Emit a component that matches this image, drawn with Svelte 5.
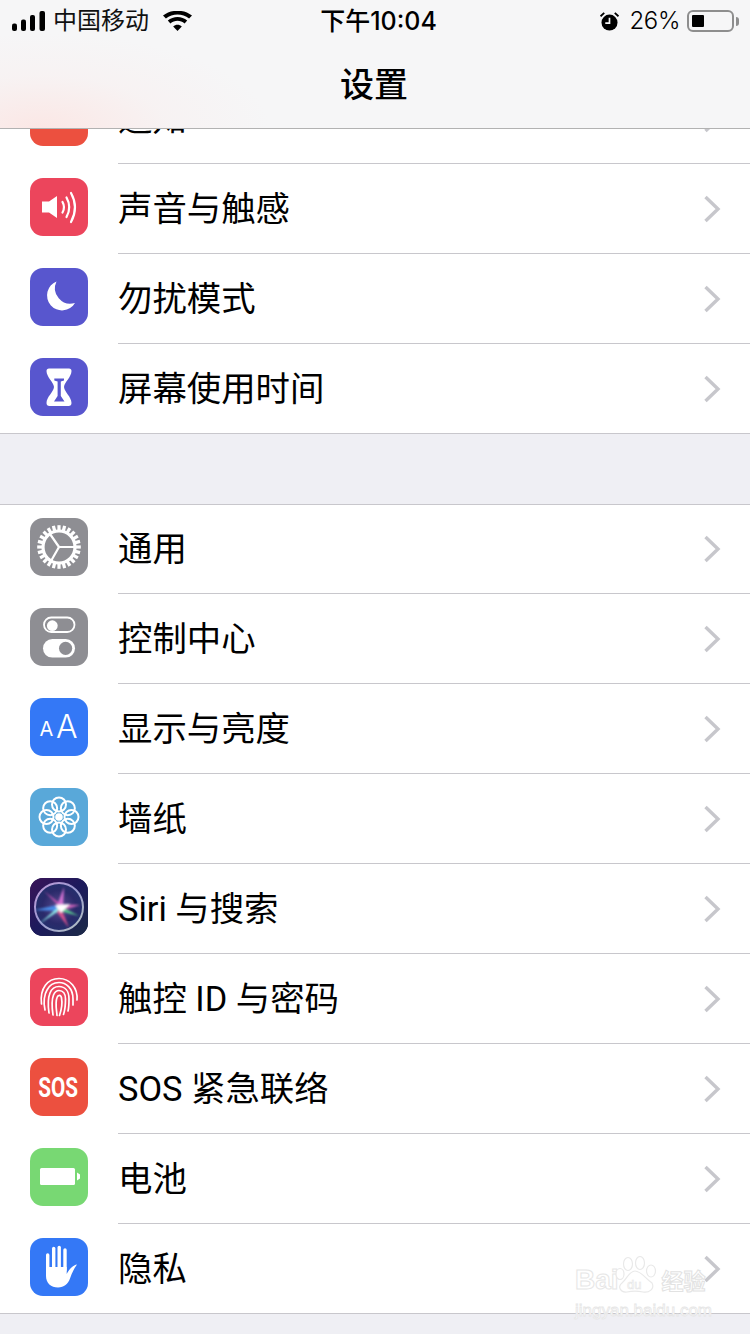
<script>
  const firstGroup = [
    { key: 'notify', label: '通知', bg: '#ec503f' },
    { key: 'sound', label: '声音与触感', bg: '#ec455c' },
    { key: 'moon', label: '勿扰模式', bg: '#5856ce' },
    { key: 'hourglass', label: '屏幕使用时间', bg: '#5856ce' }
  ];

  const secondGroup = [
    { key: 'gear', label: '通用', bg: '#8e8e93' },
    { key: 'toggles', label: '控制中心', bg: '#8e8e93' },
    { key: 'text', label: '显示与亮度', bg: '#3478f6' },
    { key: 'flower', label: '墙纸', bg: '#59a8d9' },
    { key: 'siri', label: 'Siri 与搜索', bg: '#1d1f4d' },
    { key: 'finger', label: '触控 ID 与密码', bg: '#ec455c' },
    { key: 'sos', label: 'SOS 紧急联络', bg: '#ec503f' },
    { key: 'battery', label: '电池', bg: '#78d873' },
    { key: 'hand', label: '隐私', bg: '#3478f6' }
  ];

  const teeth = Array.from({ length: 24 }, (_, i) => i * 15);
  const petals = Array.from({ length: 8 }, (_, i) => i * 45);
</script>

{#snippet glyph(key)}
  <svg class="icon-svg" viewBox="0 0 58 58">
    {#if key === 'notify'}
      <rect x="13" y="-9" width="32" height="24" rx="4" fill="none" stroke="#fff" stroke-width="2" />
    {:else if key === 'sound'}
      <polygon points="12,23.5 19,23.5 27,18 27,40 19,34.5 12,34.5" fill="#fff" />
      <g fill="none" stroke="#fff" stroke-width="2.2" stroke-linecap="round">
        <path d="M32.5 24 Q35.5 29.3 32.5 34.5" />
        <path d="M36.5 19.5 Q42 29.3 36.5 39" />
        <path d="M41 15 Q49 29.3 41 44" />
      </g>
    {:else if key === 'moon'}
      <path d="M26.5 13.5 A15 15 0 1 0 45 35 A15.5 15.5 0 0 1 26.5 13.5Z" fill="#fff" />
    {:else if key === 'hourglass'}
      <path d="M19 10.5 H39 Q41.5 10.5 41.5 13 C41.5 19 34.5 24 34 29 C34.5 34 41.5 39 41.5 45 Q41.5 48 38.5 48 H19.5 Q16.5 48 16.5 45 C16.5 39 23.5 34 24 29 C23.5 24 16.5 19 16.5 13 Q16.5 10.5 19 10.5Z" fill="#fff" />
      <path d="M24.3 20.5 H34 V22.5 L30.8 23.5 V38 L34.5 43.5 H24 L27.6 38 V23.5 L24.3 22.5Z" fill="#5856ce" />
    {:else if key === 'gear'}
      <g fill="#fff">
        {#each teeth as a}
          <rect x="27.4" y="7.2" width="3.2" height="6" transform="rotate({a} 29 29)" />
        {/each}
      </g>
      <circle cx="29" cy="29" r="16" fill="none" stroke="#fff" stroke-width="3.2" />
      <g stroke="#fff" stroke-width="2.2" stroke-linecap="round">
        <line x1="29" y1="29" x2="20" y2="16" />
        <line x1="29" y1="29" x2="44" y2="29" />
        <line x1="29" y1="29" x2="21" y2="43" />
      </g>
    {:else if key === 'toggles'}
      <rect x="14" y="9.5" width="30.5" height="14.5" rx="7.2" fill="none" stroke="#fff" stroke-width="1.8" />
      <circle cx="22.3" cy="17.7" r="5.4" fill="#fff" />
      <rect x="13" y="31" width="32" height="18.6" rx="9.3" fill="#fff" />
      <circle cx="35.6" cy="40.3" r="6.6" fill="#8e8e93" />
    {:else if key === 'text'}
      <text class="aa" x="9.5" y="37.5" font-size="20">A</text>
      <text class="aa big" x="26" y="40" font-size="32">A</text>
    {:else if key === 'flower'}
      <g fill="none" stroke="#fff" stroke-width="2">
        {#each petals as a}
          <circle cx="29" cy="16.5" r="7" transform="rotate({a} 29 29)" />
        {/each}
      </g>
      <circle cx="29" cy="29" r="3.8" fill="#fff" />
    {:else if key === 'siri'}
      <defs>
        <linearGradient id="siri-bg" x1="0" y1="0" x2="1" y2="1">
          <stop offset="0" stop-color="#3a1458" />
          <stop offset="0.5" stop-color="#1c1a5c" />
          <stop offset="1" stop-color="#1c2b46" />
        </linearGradient>
        <linearGradient id="siri-ring" x1="0" y1="0" x2="1" y2="1">
          <stop offset="0" stop-color="#c09ad8" />
          <stop offset="0.5" stop-color="#9a9ad0" />
          <stop offset="1" stop-color="#b4c4c0" />
        </linearGradient>
        <radialGradient id="siri-disc">
          <stop offset="0" stop-color="#5a4a90" />
          <stop offset="0.7" stop-color="#2a2a6a" />
          <stop offset="1" stop-color="#232f6c" />
        </radialGradient>
        <filter id="siri-blur"><feGaussianBlur stdDeviation="1" /></filter>
      </defs>
      <rect width="58" height="58" fill="url(#siri-bg)" />
      <circle cx="29" cy="29" r="24" fill="url(#siri-disc)" stroke="url(#siri-ring)" stroke-width="2" />
      <g filter="url(#siri-blur)">
        <polygon points="29,25 14,13 34,33" fill="#d858b8" />
        <polygon points="28,26 50,27 31,33" fill="#c862b8" />
        <polygon points="26,30 34,9 33,30" fill="#d070d0" />
        <polygon points="28,27 49,38 30,33" fill="#58d090" />
        <polygon points="30,27 39,50 26,33" fill="#d0508c" />
        <polygon points="27,27 5,32 28,33" fill="#4a8ce8" />
        <polygon points="32,26 9,46 27,34" fill="#90f0ec" />
        <polygon points="25,27 40,26 31,35" fill="#fff" />
      </g>
    {:else if key === 'finger'}
      <g fill="none" stroke="#fff" stroke-width="1.7" stroke-linecap="round">
        <path d="M11.5 36 C9.5 20 18 10.5 29 10.5 C40 10.5 48 20 47 32" />
        <path d="M15 42 C13 34 14.5 26 17 22 C20 16 25 14.5 29 14.5 C36 14.5 43 20 43 31 V37" />
        <path d="M19 45 C18 38 17.5 31 20 25 C22 20 26 18.5 29 18.5 C35 18.5 39 23 39 31 C39 35 39 39 38 43" />
        <path d="M23 47 C22 40 21 33 23.5 27 C25 23.5 27 22.5 29 22.5 C33 22.5 35.5 26 35.5 31 C35.5 37 35 42 33.5 46.5" />
        <path d="M27 47.5 C26.5 41 25 35 27 29.5 C28 26.5 31 26.5 31.5 30 C32.5 35 31 43 29.5 47.5" />
      </g>
    {:else if key === 'sos'}
      <text class="sos" transform="translate(8.3 38.8) scale(0.74 1)">SOS</text>
    {:else if key === 'battery'}
      <rect x="10" y="20" width="35" height="17" rx="1.5" fill="#fff" />
      <path d="M47 24.5 L50 26.5 V30.5 L47 32.5Z" fill="#fff" />
    {:else if key === 'hand'}
      <g stroke="#fff" stroke-width="3.4" stroke-linecap="round">
        <line x1="17.7" y1="17" x2="17.7" y2="34" />
        <line x1="23.7" y1="10.5" x2="23.7" y2="32" />
        <line x1="29.2" y1="9.5" x2="29.2" y2="32" />
        <line x1="35" y1="12" x2="35" y2="32" />
      </g>
      <path d="M16 29 H36.7 V36 C38.5 32.5 42.5 27 47 26.5 C44 30.5 41.5 36 40 40.5 C38 46 34 49.5 28 49.5 C21 49.5 16 45 16 38Z" fill="#fff" />
    {/if}
  </svg>
{/snippet}

{#snippet row(item)}
  <div class="row">
    <div class="icon" style="background:{item.bg}">
      {@render glyph(item.key)}
    </div>
    <div class="row-body">
      <span class="label">{item.label}</span>
      <svg class="chevron" viewBox="0 0 18 28">
        <path d="M2.5 2 L15 14 L2.5 26" />
      </svg>
    </div>
  </div>
{/snippet}

<div class="page">
  <header class="nav">
    <div class="status">
      <div class="status-left">
        <svg class="signal" viewBox="0 0 33 20">
          <rect x="0" y="12.5" width="5" height="7.5" rx="2" />
          <rect x="9" y="8.5" width="5" height="11.5" rx="2" />
          <rect x="18" y="4" width="5" height="16" rx="2" />
          <rect x="27.5" y="0" width="5.5" height="20" rx="2" />
        </svg>
        <span class="carrier">中国移动</span>
        <svg class="wifi" viewBox="0 0 29 20">
          <path d="M14.5 20 L10.2 15.4 C12.6 13.2 16.4 13.2 18.8 15.4Z" />
          <path d="M7.4 12.4 L4.8 9.6 C10.2 4.7 18.8 4.7 24.2 9.6 L21.6 12.4 C17.6 8.8 11.4 8.8 7.4 12.4Z" />
          <path d="M2.9 7.6 L0 4.6 C8 -1.9 21 -1.9 29 4.6 L26.1 7.6 C19.4 2.2 9.6 2.2 2.9 7.6Z" />
        </svg>
      </div>
      <div class="time">下午10:04</div>
      <div class="status-right">
        <svg class="alarm" viewBox="0 0 18 18">
          <circle cx="9" cy="10" r="7.6" />
          <path d="M9 5.5 V10.5 H5" fill="none" stroke="#f5f5f6" stroke-width="1.6" />
          <path d="M0.5 4 L4 0.8 M17.5 4 L14 0.8" fill="none" stroke="#000" stroke-width="1.8" />
        </svg>
        <span class="percent">26%</span>
        <div class="batt">
          <div class="batt-level"></div>
        </div>
        <div class="batt-tip"></div>
      </div>
    </div>
    <h1 class="title">设置</h1>
  </header>

  <main class="content">
    <section class="group">
      {#each firstGroup as item}
        {@render row(item)}
      {/each}
    </section>
    <section class="group second">
      {#each secondGroup as item}
        {@render row(item)}
      {/each}
    </section>
  </main>

  <div class="watermark">
    <div class="wm-top">
      <span class="wm-bai">Bai</span>
      <svg class="wm-paw" viewBox="0 0 44 38">
        <g fill="#fff" stroke="#e9e9e9" stroke-width="1.2">
          <ellipse cx="13" cy="8" rx="4.5" ry="6.5" />
          <ellipse cx="25" cy="7" rx="4.5" ry="6.5" />
          <ellipse cx="36" cy="15" rx="4.5" ry="6" />
          <ellipse cx="5" cy="18" rx="4" ry="5.5" />
          <path d="M20 15 C26 15 30 22 37 27 C40 33 34 37 28 36 C23 35 17 35 12 36 C6 37 2 31 7 27 C12 23 14 15 20 15Z" />
        </g>
        <text x="12" y="33" class="wm-du">du</text>
      </svg>
      <span class="wm-cn">经验</span>
    </div>
    <div class="wm-url">jingyan.baidu.com</div>
  </div>
</div>

<style>
  :global(body) {
    margin: 0;
    background: #efeff4;
  }

  .page {
    position: relative;
    width: 750px;
    height: 1334px;
    overflow: hidden;
    background: #efeff4;
    font-family: Roboto, "Noto Sans CJK SC", sans-serif;
    color: #000;
  }

  .nav {
    position: absolute;
    top: 0;
    left: 0;
    right: 0;
    z-index: 2;
    height: 128px;
    border-bottom: 1px solid #b2b2b2;
    background:
      radial-gradient(ellipse 230px 95px at 40px 128px, #fbe7e5 0%, rgba(248, 240, 240, 0.6) 55%, rgba(246, 246, 247, 0) 100%),
      #f6f6f7;
  }

  .status {
    display: grid;
    grid-template-columns: 1fr auto 1fr;
    align-items: center;
    height: 42px;
    padding: 0 11px 0 12px;
    font-size: 24px;
  }

  .status-left {
    display: flex;
    align-items: center;
  }

  .signal {
    width: 33px;
    height: 20px;
    margin-right: 8px;
  }

  .carrier {
    font-weight: 400;
    color: #111;
    line-height: 1;
  }

  .wifi {
    width: 29px;
    height: 20px;
    margin-left: 14px;
  }

  .time {
    font-family: Inter, "Noto Sans CJK SC", sans-serif;
    font-size: 25px;
    font-weight: 500;
    margin-left: 6px;
    line-height: 1;
  }

  .status-right {
    display: flex;
    align-items: center;
    justify-content: flex-end;
  }

  .alarm {
    width: 19px;
    height: 19px;
    margin-right: 11px;
  }

  .percent {
    font-size: 24px;
    line-height: 1;
    margin-right: 7px;
    font-family: Inter, sans-serif;
    font-weight: 300;
    letter-spacing: -0.4px;
  }

  .batt {
    box-sizing: border-box;
    width: 47px;
    height: 22px;
    border: 2px solid #8e8e8e;
    border-radius: 6px;
    padding: 3px;
  }

  .batt-level {
    width: 12px;
    height: 100%;
    background: #000;
    border-radius: 1px;
  }

  .batt-tip {
    width: 3px;
    height: 9px;
    margin-left: 2px;
    background: #8e8e8e;
    border-radius: 0 3px 3px 0;
  }

  .title {
    margin: 0 2px 0 0;
    text-align: center;
    font-size: 34px;
    font-weight: 500;
    line-height: 86px;
    color: #000;
  }

  .content {
    padding-top: 74px;
  }

  .group {
    background: #fff;
    border-bottom: 1px solid #c8c7cc;
  }

  .group .row:last-child {
    margin-bottom: -1px;
  }

  .group .row:last-child .row-body {
    border-bottom-color: transparent;
  }

  .group.second {
    margin-top: 70px;
    border-top: 1px solid #c8c7cc;
  }

  .group.second .row:first-child {
    margin-top: -1px;
  }

  .row {
    box-sizing: border-box;
    display: flex;
    height: 90px;
    padding-left: 30px;
  }

  .icon {
    flex: none;
    width: 58px;
    height: 58px;
    margin: 14px 30px 0 0;
    border-radius: 13px;
    overflow: hidden;
  }

  .icon-svg {
    display: block;
    width: 58px;
    height: 58px;
  }

  .row-body {
    flex: 1;
    display: flex;
    align-items: center;
    justify-content: space-between;
    padding-right: 29px;
    border-bottom: 1px solid #c8c7cc;
  }

  .label {
    font-size: 34.4px;
    line-height: 1;
    color: #000;
    font-weight: 400;
    padding-top: 2px;
  }

  .chevron {
    width: 18px;
    height: 28px;
    fill: none;
    stroke: #c7c7cc;
    stroke-width: 3.4;
  }

  .aa {
    fill: #fff;
    font-family: Inter, sans-serif;
    font-weight: 400;
  }

  .aa.big {
    font-weight: 300;
  }

  .sos {
    fill: #fff;
    font-family: Roboto, sans-serif;
    font-weight: 700;
    font-size: 28px;
  }

  .watermark {
    position: absolute;
    left: 575px;
    top: 1252px;
    width: 136px;
    pointer-events: none;
  }

  .wm-top {
    display: flex;
    align-items: flex-end;
    height: 42px;
  }

  .wm-bai {
    font-family: "Liberation Sans", sans-serif;
    font-size: 28px;
    font-weight: 700;
    line-height: 1;
    color: #fff;
    -webkit-text-stroke: 1px #e6e6e6;
  }

  .wm-paw {
    flex: none;
    width: 44px;
    height: 38px;
    margin-left: -4px;
  }

  .wm-du {
    font-family: "Liberation Sans", sans-serif;
    font-size: 13px;
    fill: #fff;
    stroke: #e6e6e6;
    stroke-width: 0.6;
  }

  .wm-cn {
    margin-left: 3px;
    font-size: 22px;
    line-height: 1.1;
    font-weight: 700;
    color: #fff;
    -webkit-text-stroke: 1px #e2e2e2;
  }

  .wm-url {
    margin-top: 8px;
    font-family: "Liberation Sans", sans-serif;
    font-size: 17px;
    line-height: 1;
    color: #fff;
    -webkit-text-stroke: 0.8px #e6e6e6;
    white-space: nowrap;
  }
</style>
